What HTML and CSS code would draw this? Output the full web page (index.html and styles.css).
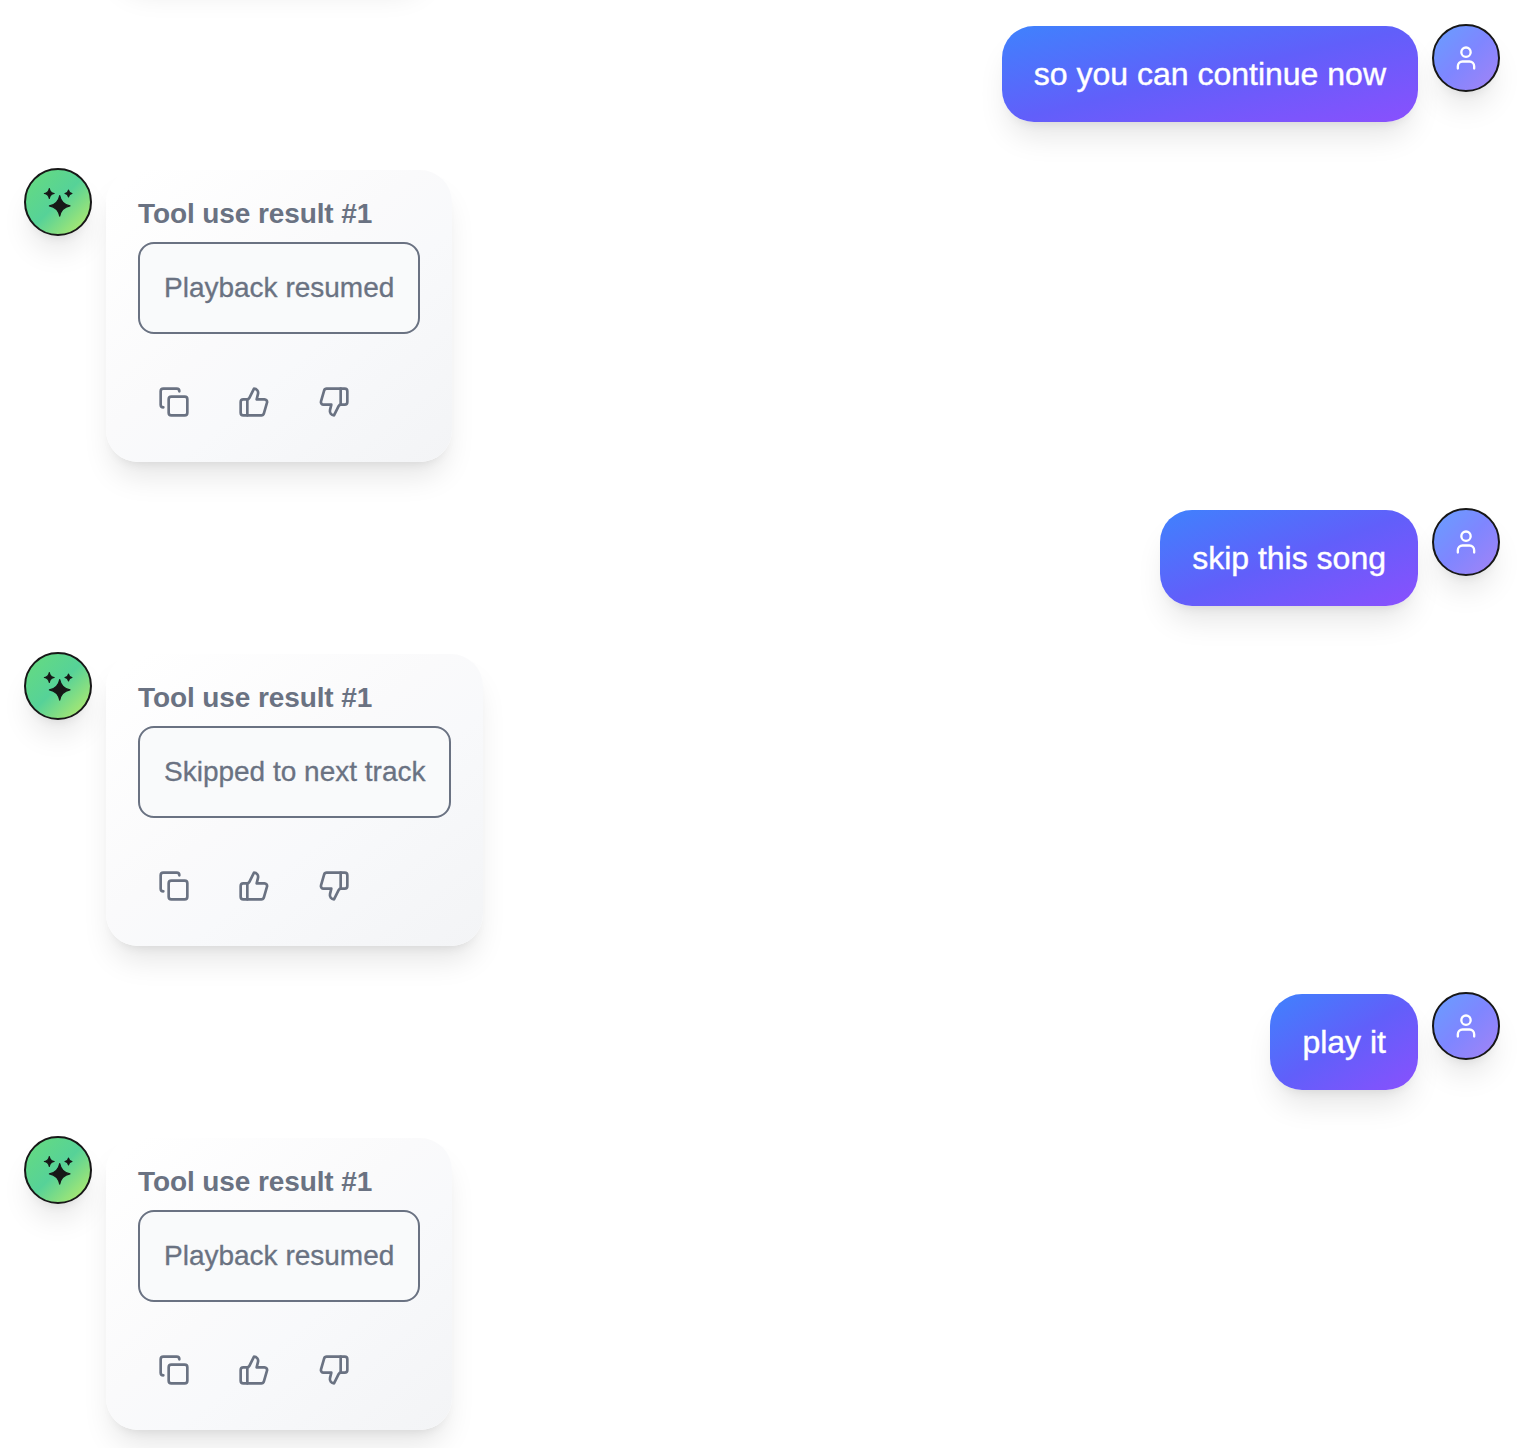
FILE: index.html
```
<!DOCTYPE html>
<html lang="en">
<head>
<meta charset="utf-8">
<title>Chat</title>
<link rel="stylesheet" href="styles.css">
</head>
<body>
<svg class="sprite" aria-hidden="true">
  <symbol id="user" viewBox="0 0 24 24"><circle cx="12" cy="7" r="4"/><path d="M19 21v-2a4 4 0 0 0-4-4H9a4 4 0 0 0-4 4v2"/></symbol>
  <symbol id="sparkles" viewBox="0 0 32 32"><path d="M17.700 9.500Q19.300 18.200 28 19.800Q19.300 21.400 17.700 30.100Q16.100 21.400 7.400 19.800Q16.100 18.200 17.700 9.500ZM7.300 2.500Q8 6.800 12.200 7.500Q8 8.200 7.300 12.500Q6.600 8.200 2.400 7.500Q6.600 6.800 7.300 2.500ZM26.500 4Q27 7 30 7.500Q27 8 26.500 11Q26 8 23 7.500Q26 7 26.500 4Z"/></symbol>
  <symbol id="copy" viewBox="0 0 24 24"><rect x="8" y="8" width="14" height="14" rx="2"/><path d="M4 16c-1.100 0-2-.9-2-2V4c0-1.100.9-2 2-2h10c1.100 0 2 .9 2 2"/></symbol>
  <symbol id="up" viewBox="0 0 24 24"><path d="M7 10v12"/><path d="M15 5.880 14 10h5.830a2 2 0 0 1 1.920 2.560l-2.330 8A2 2 0 0 1 17.500 22H4a2 2 0 0 1-2-2v-8a2 2 0 0 1 2-2h2.760a2 2 0 0 0 1.790-1.110L12 2a3.130 3.130 0 0 1 3 3.880Z"/></symbol>
  <symbol id="down" viewBox="0 0 24 24"><path d="M17 14V2"/><path d="M9 18.120 10 14H4.170a2 2 0 0 1-1.920-2.560l2.330-8A2 2 0 0 1 6.500 2H20a2 2 0 0 1 2 2v8a2 2 0 0 1-2 2h-2.760a2 2 0 0 0-1.790 1.110L12 22a3.130 3.130 0 0 1-3-3.880Z"/></symbol>
</svg>
<main class="chat">
  <div class="previous"></div>
  <div class="row row-user">
    <div class="bubble">so you can continue now</div>
    <div class="avatar avatar-user"><svg><use href="#user"/></svg></div>
  </div>
  <div class="row">
    <div class="avatar avatar-bot"><svg><use href="#sparkles"/></svg></div>
    <div class="card">
      <div class="title">Tool use result #1</div>
      <div class="result">Playback resumed</div>
      <div class="actions"><svg><use href="#copy"/></svg><svg><use href="#up"/></svg><svg><use href="#down"/></svg></div>
    </div>
  </div>
  <div class="row row-user">
    <div class="bubble">skip this song</div>
    <div class="avatar avatar-user"><svg><use href="#user"/></svg></div>
  </div>
  <div class="row">
    <div class="avatar avatar-bot"><svg><use href="#sparkles"/></svg></div>
    <div class="card">
      <div class="title">Tool use result #1</div>
      <div class="result">Skipped to next track</div>
      <div class="actions"><svg><use href="#copy"/></svg><svg><use href="#up"/></svg><svg><use href="#down"/></svg></div>
    </div>
  </div>
  <div class="row row-user">
    <div class="bubble">play it</div>
    <div class="avatar avatar-user"><svg><use href="#user"/></svg></div>
  </div>
  <div class="row">
    <div class="avatar avatar-bot"><svg><use href="#sparkles"/></svg></div>
    <div class="card">
      <div class="title">Tool use result #1</div>
      <div class="result">Playback resumed</div>
      <div class="actions"><svg><use href="#copy"/></svg><svg><use href="#up"/></svg><svg><use href="#down"/></svg></div>
    </div>
  </div>
</main>
</body>
</html>
```
FILE: styles.css
```
* { box-sizing: border-box; }
body {
  margin: 0;
  height: 1448px;
  overflow: hidden;
  background: #fff;
  font-family: "Liberation Sans", Arial, sans-serif;
}
.sprite { display: none; }
svg { display: block; fill: none; stroke: currentColor; stroke-width: 2; stroke-linecap: round; stroke-linejoin: round; }
.chat { display: flex; flex-direction: column; gap: 46px; padding: 0 34px 0 24px; }
.previous, .bubble, .card, .avatar {
  box-shadow: 0 20px 30px -6px rgba(0, 0, 0, .1), 0 8px 12px -8px rgba(0, 0, 0, .1);
}
.previous { width: 316px; height: 292px; margin: -314px 0 0 90px; border-radius: 32px; flex: none; }
.row { display: flex; align-items: flex-start; gap: 14px; }
.row-user { justify-content: flex-end; }
.avatar {
  display: flex; align-items: center; justify-content: center;
  flex: none; width: 68px; height: 68px;
  border: 2px solid #171717; border-radius: 50%;
}
.avatar-user { color: #fff; background: linear-gradient(to bottom right, #66a0ff, #7f86ff, #a683f5) border-box; }
.avatar-user svg { width: 28px; height: 28px; }
.avatar-bot { color: #171717; background: linear-gradient(to bottom right, #68dc7c, #56d298 50%, #c5ef65) border-box; }
.avatar-bot svg { width: 32px; height: 32px; fill: currentColor; stroke-width: 1.2; }
.bubble {
  margin-top: 2px; padding: 24px 32px; border-radius: 32px;
  color: #fff; font-size: 32px; line-height: 48px;
  -webkit-text-stroke: .4px currentColor;
  background: linear-gradient(to bottom right, #3f82fd, #615ffa, #8a50fd);
}
.card {
  height: 292px; margin-top: 2px; padding: 24px 32px; border-radius: 32px;
  color: #6a7282; font-size: 28px; line-height: 40px;
  background: linear-gradient(to bottom right, #fff 5%, #fafafb 45%, #f8f9fb 60%, #f3f4f6);
}
.title { font-weight: 700; letter-spacing: -.1px; }
.result { margin-top: 8px; padding: 24px; height: 92px; border: 2px solid #6a7282; border-radius: 16px; background: #f9fafb; -webkit-text-stroke: .3px currentColor; }
.actions { display: flex; gap: 48px; margin-top: 52px; padding-left: 20px; }
.actions svg { width: 32px; height: 32px; }
```
